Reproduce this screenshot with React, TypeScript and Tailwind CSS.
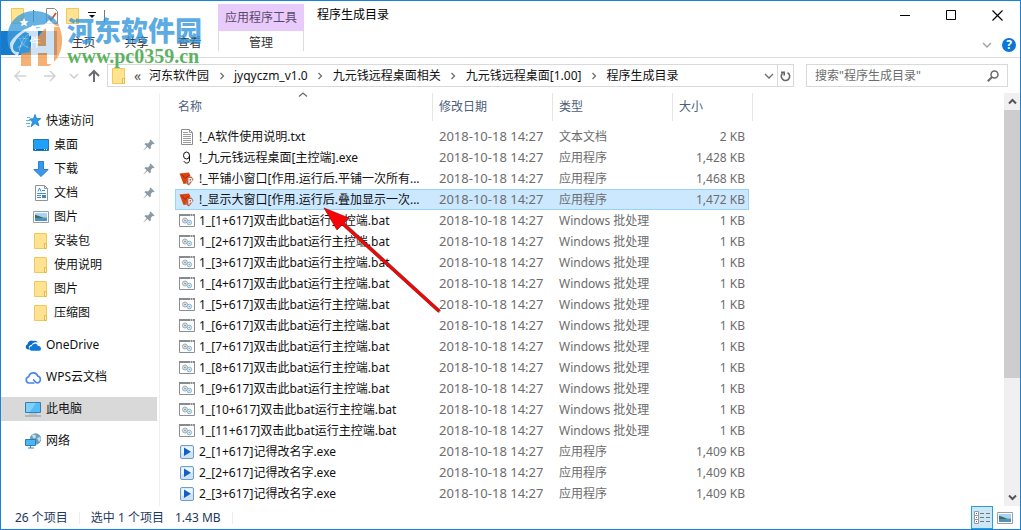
import { useState, type ReactNode } from 'react';

type IconName = 'txt' | 'nine' | 'red' | 'bat' | 'play';

interface FileRow {
  icon: IconName;
  name: string;
  type: string;
  size: string;
}

const DATE = '2018-10-18 14:27';

const FILES: FileRow[] = [
  { icon: 'txt', name: '!_A软件使用说明.txt', type: '文本文档', size: '2 KB' },
  { icon: 'nine', name: '!_九元钱远程桌面[主控端].exe', type: '应用程序', size: '1,428 KB' },
  { icon: 'red', name: '!_平铺小窗口[作用.运行后.平铺一次所有...', type: '应用程序', size: '1,468 KB' },
  { icon: 'red', name: '!_显示大窗口[作用.运行后.叠加显示一次...', type: '应用程序', size: '1,472 KB' },
  ...Array.from({ length: 11 }, (_, i): FileRow => ({
    icon: 'bat',
    name: `1_[${i + 1}+617]双击此bat运行主控端.bat`,
    type: 'Windows 批处理',
    size: '1 KB',
  })),
  ...Array.from({ length: 3 }, (_, i): FileRow => ({
    icon: 'play',
    name: `2_[${i + 1}+617]记得改名字.exe`,
    type: '应用程序',
    size: '1,409 KB',
  })),
];

const CRUMBS = ['河东软件园', 'jyqyczm_v1.0', '九元钱远程桌面相关', '九元钱远程桌面[1.00]', '程序生成目录'];

/* ---------- icons ---------- */

function FolderIcon() {
  return (
    <svg width="14" height="16" viewBox="0 0 14 16" className="shrink-0">
      <path d="M.5 .5h12v15H.5z" fill="#ffe391" stroke="#efca5a" />
      <path d="M10.500 10.500h2v5h-2z" fill="#fff0b8" stroke="#e5bb46" />
    </svg>
  );
}

function StarIcon() {
  return (
    <svg width="15" height="14" viewBox="0 0 15 14">
      <path d="M9 .5l1.600 4 4.200.1-3.300 2.700 1.400 4.600-3.800-2.400-4 3.200 1.400-4.700L3.500 5l4-.3z" fill="#2e9be6" stroke="#1b7fcb" strokeWidth=".8" />
      <path d="M1 3.500h3M0 6.500h4M0 9.500h4M1 12.500h3" stroke="#62b4ec" strokeWidth="1" />
    </svg>
  );
}

function DesktopIcon() {
  return (
    <svg width="16" height="12" viewBox="0 0 16 12">
      <path d="M.5 .5h15v11H.5z" fill="#1ea0fb" stroke="#1c75bd" />
      <path d="M1 10.500h14" stroke="#0f5f9f" />
      <path d="M2 10.500h1M11 10.500h1M13 10.500h1" stroke="#fff" />
    </svg>
  );
}

function DownloadIcon() {
  return (
    <svg width="16" height="16" viewBox="0 0 16 16">
      <path d="M5.500 .5h5v8h4.700L8 15.500.8 8.500h4.700z" fill="#3b97e8" stroke="#2a7fce" />
    </svg>
  );
}

function DocumentIcon() {
  return (
    <svg width="13" height="16" viewBox="0 0 13 16">
      <path d="M.5 .5h9l3 3v12H.5z" fill="#fff" stroke="#8d9499" />
      <path d="M9.500.5v3h3" fill="none" stroke="#8d9499" />
      <path d="M3 6.500l1.500-3.500 1.500 3.500M7 5.500h3M2 8.500h9M2 10.500h4M2 12.500h4" fill="none" stroke="#3f8fc9" />
      <path d="M7 10h4v3H7z" fill="#3f87b8" />
    </svg>
  );
}

function PictureIcon() {
  return (
    <svg width="16" height="12" viewBox="0 0 16 12">
      <path d="M.5 .5h15v11H.5z" fill="#fff" stroke="#999ea2" />
      <path d="M2 2h12v4H2z" fill="#a9d3f5" />
      <path d="M2 4c3 0 6 3 12 2.500V8H2z" fill="#3c6a67" />
      <path d="M2 7h12v3H2z" fill="#4f93bd" />
    </svg>
  );
}

function OneDriveIcon() {
  return (
    <svg width="17" height="11" viewBox="0 0 17 11">
      <path d="M4.500 9.500H3A2.700 2.700 0 0 1 2.500 4.300 4 4 0 0 1 8.500 1a4 4 0 0 1 4.500 1.500C9 1.500 7 3.500 6.500 5 4 5 3 7.500 4.500 9.500z" fill="#0a6cc9" />
      <path d="M6.500 10.800a2.300 2.300 0 0 1 .3-4.600C7.500 3.500 11.800 2.800 13 6a2.400 2.400 0 0 1 1 4.800z" fill="#0f78d8" />
    </svg>
  );
}

function CloudIcon() {
  return (
    <svg width="17" height="13" viewBox="0 0 17 13" fill="none" stroke="#4a82f0" strokeWidth="1.600">
      <path d="M9.500 12H4A3.200 3.200 0 0 1 3.800 5.700 4.600 4.600 0 0 1 12.700 5 3.600 3.600 0 0 1 12.500 12c-2.500 0-2.500-3-4.500-3.500" />
    </svg>
  );
}

function ComputerIcon() {
  return (
    <svg width="17" height="16" viewBox="0 0 17 16">
      <path d="M.5 1.500h15v10H.5z" fill="#53bbf8" stroke="#3d7ca6" />
      <path d="M1 2h10L5 11H1z" fill="#7fd0ff" />
      <path d="M4 13h8" stroke="#9fb4c2" />
      <path d="M0 15h16" stroke="#7799b0" />
    </svg>
  );
}

function NetworkIcon() {
  return (
    <svg width="17" height="16" viewBox="0 0 17 16">
      <circle cx="10.500" cy="6" r="5.700" fill="#6f9db8" />
      <path d="M7 2c2-1 4 0 4 1.500S9 6 8 5zM12 5l3-1 1 2-2 3z" fill="#bfe0ef" />
      <path d="M.5 6.500h10v6H.5z" fill="#4db7f5" stroke="#2b7fb8" />
      <path d="M3 15h6M5.500 13v2" stroke="#3d86b5" />
    </svg>
  );
}

function PinIcon() {
  return (
    <svg width="12" height="12" viewBox="0 0 12 12" className="shrink-0">
      <path d="M7.500.5l4 4-1 .8-1-.2-1.800 2 .3 2.200-1.200 1-2.400-2.300L.8 11.300l-.3-.4 3.200-3.600-2.200-2 1-1.200 2.400.3 2-1.800-.2-1.200z" fill="#8d9aa5" />
    </svg>
  );
}

function FileIcon({ name }: { name: IconName }) {
  if (name === 'txt') {
    return (
      <svg width="16" height="16" viewBox="0 0 16 16">
        <path d="M2.500 .5h8l3 3v12h-11z" fill="#fff" stroke="#8c8c8c" />
        <path d="M10.500.5v3h3M4 3.500h5M4 5.500h8M4 7.500h8M4 9.500h8M4 11.500h8M4 13.500h8" fill="none" stroke="#9c9c9c" />
      </svg>
    );
  }
  if (name === 'nine') {
    return (
      <svg width="16" height="16" viewBox="0 0 16 16" fill="none" stroke="#111" strokeWidth="1">
        <ellipse cx="7.500" cy="5.500" rx="3" ry="3.500" />
        <path d="M10.500 5.500v4.500c0 2-1 3-2.800 3-1.500 0-2.500-.8-2.700-2" />
      </svg>
    );
  }
  if (name === 'red') {
    return (
      <svg width="16" height="16" viewBox="0 0 16 16">
        <path d="M.5 2.500L10 1.500l1.500 3.500-3 2.500L7.500 12.500l-3 .5z" fill="#dd4310" />
        <path d="M2.500 3L6 7.500 10.500 4" fill="none" stroke="#a22c08" />
        <path d="M8 6l4.500-.5 2 3L12 12l-2 2.500-2.500-1.500z" fill="#b5664a" />
        <path d="M10 12.500V7.500h1.500a1.300 1.300 0 0 1 0 2.700H10" fill="none" stroke="#fff" strokeWidth="1.100" />
      </svg>
    );
  }
  if (name === 'bat') {
    return (
      <svg width="16" height="14" viewBox="0 0 16 14">
        <path d="M.5 .5h15v12H.5z" fill="#fff" stroke="#8b9096" />
        <path d="M0 1h16" stroke="#868b90" strokeWidth="2" />
        <path d="M11 1h1M13 1h1" stroke="#fff" />
        <circle cx="6" cy="6.500" r="2.500" fill="#dfe3e5" stroke="#a3abb0" />
        <circle cx="6" cy="6.500" r=".8" fill="#7d888f" />
        <circle cx="10.300" cy="8.500" r="2.300" fill="#d6ecf8" stroke="#8db6cd" />
        <circle cx="10.300" cy="8.500" r=".7" fill="#7fa8bf" />
      </svg>
    );
  }
  return (
    <svg width="16" height="16" viewBox="0 0 16 16">
      <rect x="1.500" y="1.500" width="13" height="13" rx="1.500" fill="#cfe3f7" stroke="#6f9ccb" />
      <path d="M2.500 2.500h11v5c-4 2-8 2-11 2z" fill="#eef6fd" />
      <path d="M5 3.500l7 4.300L5 12z" fill="#0d62c4" />
    </svg>
  );
}

function Chevron({ dir, color = '#6d6d6d' }: { dir: 'right' | 'down' | 'up'; color?: string }) {
  const d = { right: 'M3.500 2l3 3-3 3', down: 'M1 3l4 4 4-4', up: 'M1 6.500L5 3l4 3.500' }[dir];
  return (
    <svg width="10" height="10" viewBox="0 0 10 10" fill="none" stroke={color} strokeWidth="1.300">
      <path d={d} />
    </svg>
  );
}

function NavArrow({ dir }: { dir: 'left' | 'right' | 'up' }) {
  const d = {
    left: 'M13 7H2M7 2L2 7l5 5',
    right: 'M1 7h11M7 2l5 5-5 5',
    up: 'M7 13V2M2 7l5-5 5 5',
  }[dir];
  return (
    <svg width="14" height="14" viewBox="0 0 14 14" fill="none" stroke={dir === 'up' ? '#6a6d71' : '#d2d2d2'} strokeWidth={dir === 'up' ? 2 : 1.5}>
      <path d={d} />
    </svg>
  );
}

/* ---------- header ---------- */

function TitleBar() {
  return (
    <header className="flex h-[57px] justify-between border-b border-[#dadbdc]">
      <div className="flex">
        <div className="flex w-[217px] flex-col">
          <div className="flex h-[30px] items-center gap-2 pl-[10px]">
            <FolderIcon />
            <span className="h-3 w-px bg-[#666]" />
            <button aria-label="属性" className="pl-1">
              <svg width="12" height="16" viewBox="0 0 12 16">
                <path d="M.5 .5h8l3 3v12H.5z" fill="#fff" stroke="#8a8a8a" />
                <path d="M2.500 8.500l2.500 3.500 5-7" fill="none" stroke="#e2491f" strokeWidth="1.800" />
              </svg>
            </button>
            <button aria-label="新建文件夹"><FolderIcon /></button>
            <button aria-label="自定义快速访问工具栏">
              <svg width="8" height="8" viewBox="0 0 8 8">
                <path d="M0 .5h8" stroke="#111" />
                <path d="M1 3h6L4 6z" fill="#111" />
              </svg>
            </button>
            <span className="h-3 w-px bg-[#777]" />
          </div>
          <nav className="flex h-6 items-center">
            <button className="h-6 w-14 bg-[#1979ca] text-white">文件</button>
            <button className="w-[53px] text-[#333]">主页</button>
            <button className="w-[53px] text-[#333]">共享</button>
            <button className="w-[53px] text-[#333]">查看</button>
          </nav>
        </div>
        <div className="flex w-[86px] flex-col pt-[3px]">
          <div className="flex h-[27px] items-center justify-center bg-[#e9cbfb] text-[#5b4868]">应用程序工具</div>
          <button className="h-5 border-x border-[#dcdcdc] leading-6 text-[#333]">管理</button>
        </div>
        <h1 className="pt-1 pl-[13px] leading-5 text-black">程序生成目录</h1>
      </div>
      <div className="flex flex-col">
        <div className="flex h-7 items-center gap-[35px] pr-[17px]">
          <button aria-label="最小化">
            <svg width="11" height="11"><path d="M0 5.500h10" stroke="#000" /></svg>
          </button>
          <button aria-label="最大化">
            <svg width="11" height="11"><path d="M.5 .5h9v9h-9z" fill="none" stroke="#000" /></svg>
          </button>
          <button aria-label="关闭">
            <svg width="11" height="11"><path d="M.5 .5l10 10M10.500 .5l-10 10" stroke="#000" strokeWidth="1.200" /></svg>
          </button>
        </div>
        <div className="flex h-7 items-center justify-end gap-[10px] pt-1 pr-1">
          <button aria-label="展开功能区"><Chevron dir="down" color="#a0a0a0" /></button>
          <button aria-label="帮助" className="h-[14px] w-[14px] rounded-full bg-[#0b76d8] text-center text-xs leading-[14px] font-bold text-white">?</button>
        </div>
      </div>
    </header>
  );
}

function AddressBar() {
  return (
    <div className="flex h-[35px] items-center pr-3 pl-3">
      <div className="flex w-[94px] items-center">
        <button aria-label="后退" className="mr-4"><NavArrow dir="left" /></button>
        <button aria-label="前进" className="mr-3"><NavArrow dir="right" /></button>
        <button aria-label="最近浏览" className="mr-2"><Chevron dir="down" color="#c9c9c9" /></button>
        <button aria-label="上移"><NavArrow dir="up" /></button>
      </div>
      <div className="flex h-[23px] min-w-0 flex-1 items-center border border-[#d9d9d9] pl-1">
        <FolderIcon />
        <span className="w-[23px] text-center text-sm leading-4 text-[#555]">«</span>
        <ol className="flex flex-1 items-center">
          {CRUMBS.map((crumb, i) => (
            <li key={crumb} className="flex items-center whitespace-nowrap">
              {i > 0 && <span className="flex w-[25px] justify-center"><Chevron dir="right" /></span>}
              <button className="text-[#111]">{crumb}</button>
            </li>
          ))}
        </ol>
        <button aria-label="历史记录" className="px-[3px]"><Chevron dir="down" /></button>
        <button aria-label="刷新" className="flex h-full w-4 items-center justify-center border-l border-[#d9d9d9]">
          <svg width="11" height="12" viewBox="0 0 11 12" fill="none" stroke="#666" strokeWidth="1.600">
            <path d="M7.500 2.600A4.200 4.200 0 1 1 2.600 3.200" />
            <path d="M1 2.200h3.200v3.300" />
          </svg>
        </button>
      </div>
      <label className="ml-3 flex h-[23px] w-[202px] items-center border border-[#d9d9d9] pr-2 pl-2">
        <input
          type="search"
          aria-label="搜索"
          placeholder={'搜索"程序生成目录"'}
          className="min-w-0 flex-1 bg-transparent outline-none placeholder:text-[#6d6d6d]"
        />
        <svg width="12" height="12" viewBox="0 0 12 12" fill="none" stroke="#6a6a6a">
          <circle cx="7.500" cy="4.500" r="3.500" strokeWidth="1.500" />
          <path d="M5 7L.8 11.200" strokeWidth="2" />
        </svg>
      </label>
    </div>
  );
}

/* ---------- sidebar ---------- */

interface NavItemProps {
  icon: ReactNode;
  label: string;
  child?: boolean;
  pinned?: boolean;
  active?: boolean;
}

function NavItem({ icon, label, child, pinned, active }: NavItemProps) {
  return (
    <li className={active ? 'bg-[#d9d9d9]' : ''}>
      <a href="#" className={`flex h-6 items-center pr-[2px] ${child ? 'pl-[30px]' : 'pl-6'}`}>
        <span className={`flex justify-center ${child ? 'w-[23px] pr-[3px]' : 'w-[21px] pr-1'}`}>{icon}</span>
        <span className="flex-1">{label}</span>
        {pinned && <PinIcon />}
      </a>
    </li>
  );
}

function Sidebar() {
  return (
    <nav className="w-[159px] shrink-0 border-r border-[#f0f0f0] pt-4 pr-[2px] text-[#111]">
      <ul>
        <NavItem icon={<StarIcon />} label="快速访问" />
        <NavItem icon={<DesktopIcon />} label="桌面" child pinned />
        <NavItem icon={<DownloadIcon />} label="下载" child pinned />
        <NavItem icon={<DocumentIcon />} label="文档" child pinned />
        <NavItem icon={<PictureIcon />} label="图片" child pinned />
        <NavItem icon={<FolderIcon />} label="安装包" child />
        <NavItem icon={<FolderIcon />} label="使用说明" child />
        <NavItem icon={<FolderIcon />} label="图片" child />
        <NavItem icon={<FolderIcon />} label="压缩图" child />
      </ul>
      <ul className="flex flex-col gap-2 pt-2">
        <NavItem icon={<OneDriveIcon />} label="OneDrive" />
        <NavItem icon={<CloudIcon />} label="WPS云文档" />
        <NavItem icon={<ComputerIcon />} label="此电脑" active />
        <NavItem icon={<NetworkIcon />} label="网络" />
      </ul>
    </nav>
  );
}

/* ---------- file list ---------- */

function FileTable() {
  const [selected, setSelected] = useState(3);

  return (
    <table className="w-[578px] table-fixed border-separate border-spacing-0 text-left">
      <colgroup>
        <col className="w-[258px]" />
        <col className="w-[120px]" />
        <col className="w-[120px]" />
        <col className="w-[76px]" />
        <col className="w-1" />
      </colgroup>
      <thead>
        <tr className="text-[#4c607a]">
          <th className="relative h-7 border-r border-[#e5e5e5] p-0 pl-[3px] font-normal">
            名称
            <span className="absolute -top-[3px] left-[123px]"><Chevron dir="up" /></span>
          </th>
          <th className="border-r border-[#e5e5e5] p-0 pl-[6px] font-normal">修改日期</th>
          <th className="border-r border-[#e5e5e5] p-0 pl-[6px] font-normal">类型</th>
          <th className="p-0 pl-[6px] font-normal">大小</th>
          <th className="border-r border-[#e5e5e5] p-0" aria-label="更多" />
        </tr>
        <tr className="h-[5px]" />
      </thead>
      <tbody>
        {FILES.map((file, i) => {
          const cell = i === selected ? 'border-[#99d1ff] bg-[#cce8ff]' : 'border-transparent';
          return (
            <tr key={file.name} onClick={() => setSelected(i)}>
              <td className={`h-[21px] border-y border-l p-0 pl-[3px] text-[#111] ${cell}`}>
                <span className="flex h-[19px] items-center gap-1 whitespace-nowrap">
                  <span className="w-4 shrink-0"><FileIcon name={file.icon} /></span>
                  {file.name}
                </span>
              </td>
              <td className={`border-y p-0 pl-[6px] text-[13px] leading-[19px] whitespace-nowrap text-[#6d6d6d] ${cell}`}>{DATE}</td>
              <td className={`border-y p-0 pl-[6px] leading-[19px] text-[#6d6d6d] ${cell}`}>{file.type}</td>
              <td className={`border-y border-r p-0 pr-[3px] text-right leading-[19px] text-[#6d6d6d] ${cell}`}>{file.size}</td>
            </tr>
          );
        })}
      </tbody>
    </table>
  );
}

function ScrollBar() {
  return (
    <div className="flex w-4 shrink-0 flex-col bg-[#f0f0f0]">
      <button aria-label="向上滚动" className="flex h-[17px] items-center justify-center">
        <svg width="9" height="7" viewBox="0 0 9 7" fill="none" stroke="#555" strokeWidth="2"><path d="M1 5.500L4.500 2 8 5.500" /></svg>
      </button>
      <div className="h-[268px] bg-[#cdcdcd]" />
      <button aria-label="向下滚动" className="mt-auto flex h-[17px] items-center justify-center">
        <svg width="9" height="7" viewBox="0 0 9 7" fill="none" stroke="#555" strokeWidth="2"><path d="M1 1.500L4.500 5 8 1.500" /></svg>
      </button>
    </div>
  );
}

function StatusBar() {
  return (
    <footer className="flex h-[23px] items-center justify-between text-[#1e395b]">
      <div className="flex items-center pl-[14px]">
        <span>26 个项目</span>
        <span className="mx-[11px] h-3 w-px bg-[#ececec]" />
        <span>选中 1 个项目</span>
        <span className="pl-[11px]">1.43 MB</span>
        <span className="ml-[11px] h-3 w-px bg-[#ececec]" />
      </div>
      <div className="flex items-center gap-1 pr-[7px]">
        <button aria-label="详细信息" className="flex h-[23px] w-[22px] items-center justify-center border border-[#26a0da] bg-[#cbe8f6]">
          <svg width="16" height="13" viewBox="0 0 16 13">
            <path d="M.5 .5h4v4h-4zM.5 4.500h4v4h-4zM.5 8.500h4v4h-4z" fill="#fff" stroke="#9a9a9a" />
            <path d="M6 2.500h4M12 2.500h4M6 6.500h4M12 6.500h4M6 10.500h4M12 10.500h4" stroke="#777" />
            <path d="M2 2.500h1" stroke="#555" />
            <path d="M2 6.500h1" stroke="#3c8cf0" />
            <path d="M2 10.500h1" stroke="#d22" />
          </svg>
        </button>
        <button aria-label="大缩略图"><PictureIcon /></button>
      </div>
    </footer>
  );
}

/* ---------- overlays ---------- */

function Watermark() {
  return (
    <div className="pointer-events-none absolute top-[9px] left-[5px] flex items-center gap-1">
      <svg width="57" height="58" viewBox="0 0 57 58" opacity=".78">
        <path d="M3 38C-3 18 9 1 28 1c12 0 21 6 25 14C35 11 15 20 13 46z" fill="#3c9edc" />
        <path d="M44 13l8 1c8 15 4 34-9 42H15V41h7l12-17z" fill="#f39a4c" />
        <path d="M4 33C12 18 35 10 54 17 35 16 17 25 12 46 6 44 4 40 4 33z" fill="#fff" />
        <path d="M7 36C12 22 28 17 35 17 20 22 14 32 13 42 8 42 7 40 7 36z" fill="#3c9edc" />
        <path d="M13 44c1-8 4-16 10-20l1 18z" fill="#3c9edc" />
        <path d="M19 22l8-7 5 5v16h8V17h-4l7-7 8 7h-3v37h-7V43h-9v13h-7V24z" fill="#fff" />
        <path d="M18 8l1.500 3 3 .3-2.300 2 .8 3L18 14.800l-3 1.500.8-3-2.300-2 3-.3z" fill="#fff" />
      </svg>
      <div className="flex flex-col gap-[2px] pt-1 whitespace-nowrap">
        <span className="font-['Noto_Sans_CJK_SC',sans-serif] text-[27px] leading-7 font-black text-[#2f95dc]/80">河东软件园</span>
        <span className="font-['Liberation_Serif',serif] text-xl leading-5 font-bold text-[#3fa544]/85">www.pc0359.cn</span>
      </div>
    </div>
  );
}

function PointerArrow() {
  return (
    <svg width="122" height="110" viewBox="0 0 122 110" className="pointer-events-none absolute top-[205px] left-[322px]">
      <path d="M19 16L117 106" stroke="#222" strokeOpacity=".45" strokeWidth="3.500" />
      <path d="M1 2l25 10-5 5 96 87-2 2L19 19l-5 5z" fill="#f50505" stroke="#a01010" strokeWidth=".7" />
    </svg>
  );
}

export default function App() {
  return (
    <div className="relative flex min-h-screen flex-col border border-[#1883d7] bg-white font-['Noto_Sans','Noto_Sans_CJK_SC',sans-serif] text-xs">
      <TitleBar />
      <AddressBar />
      <main className="flex flex-1">
        <Sidebar />
        <div className="min-w-0 flex-1 pl-[15px]">
          <FileTable />
        </div>
        <ScrollBar />
      </main>
      <StatusBar />
      <Watermark />
      <PointerArrow />
    </div>
  );
}
